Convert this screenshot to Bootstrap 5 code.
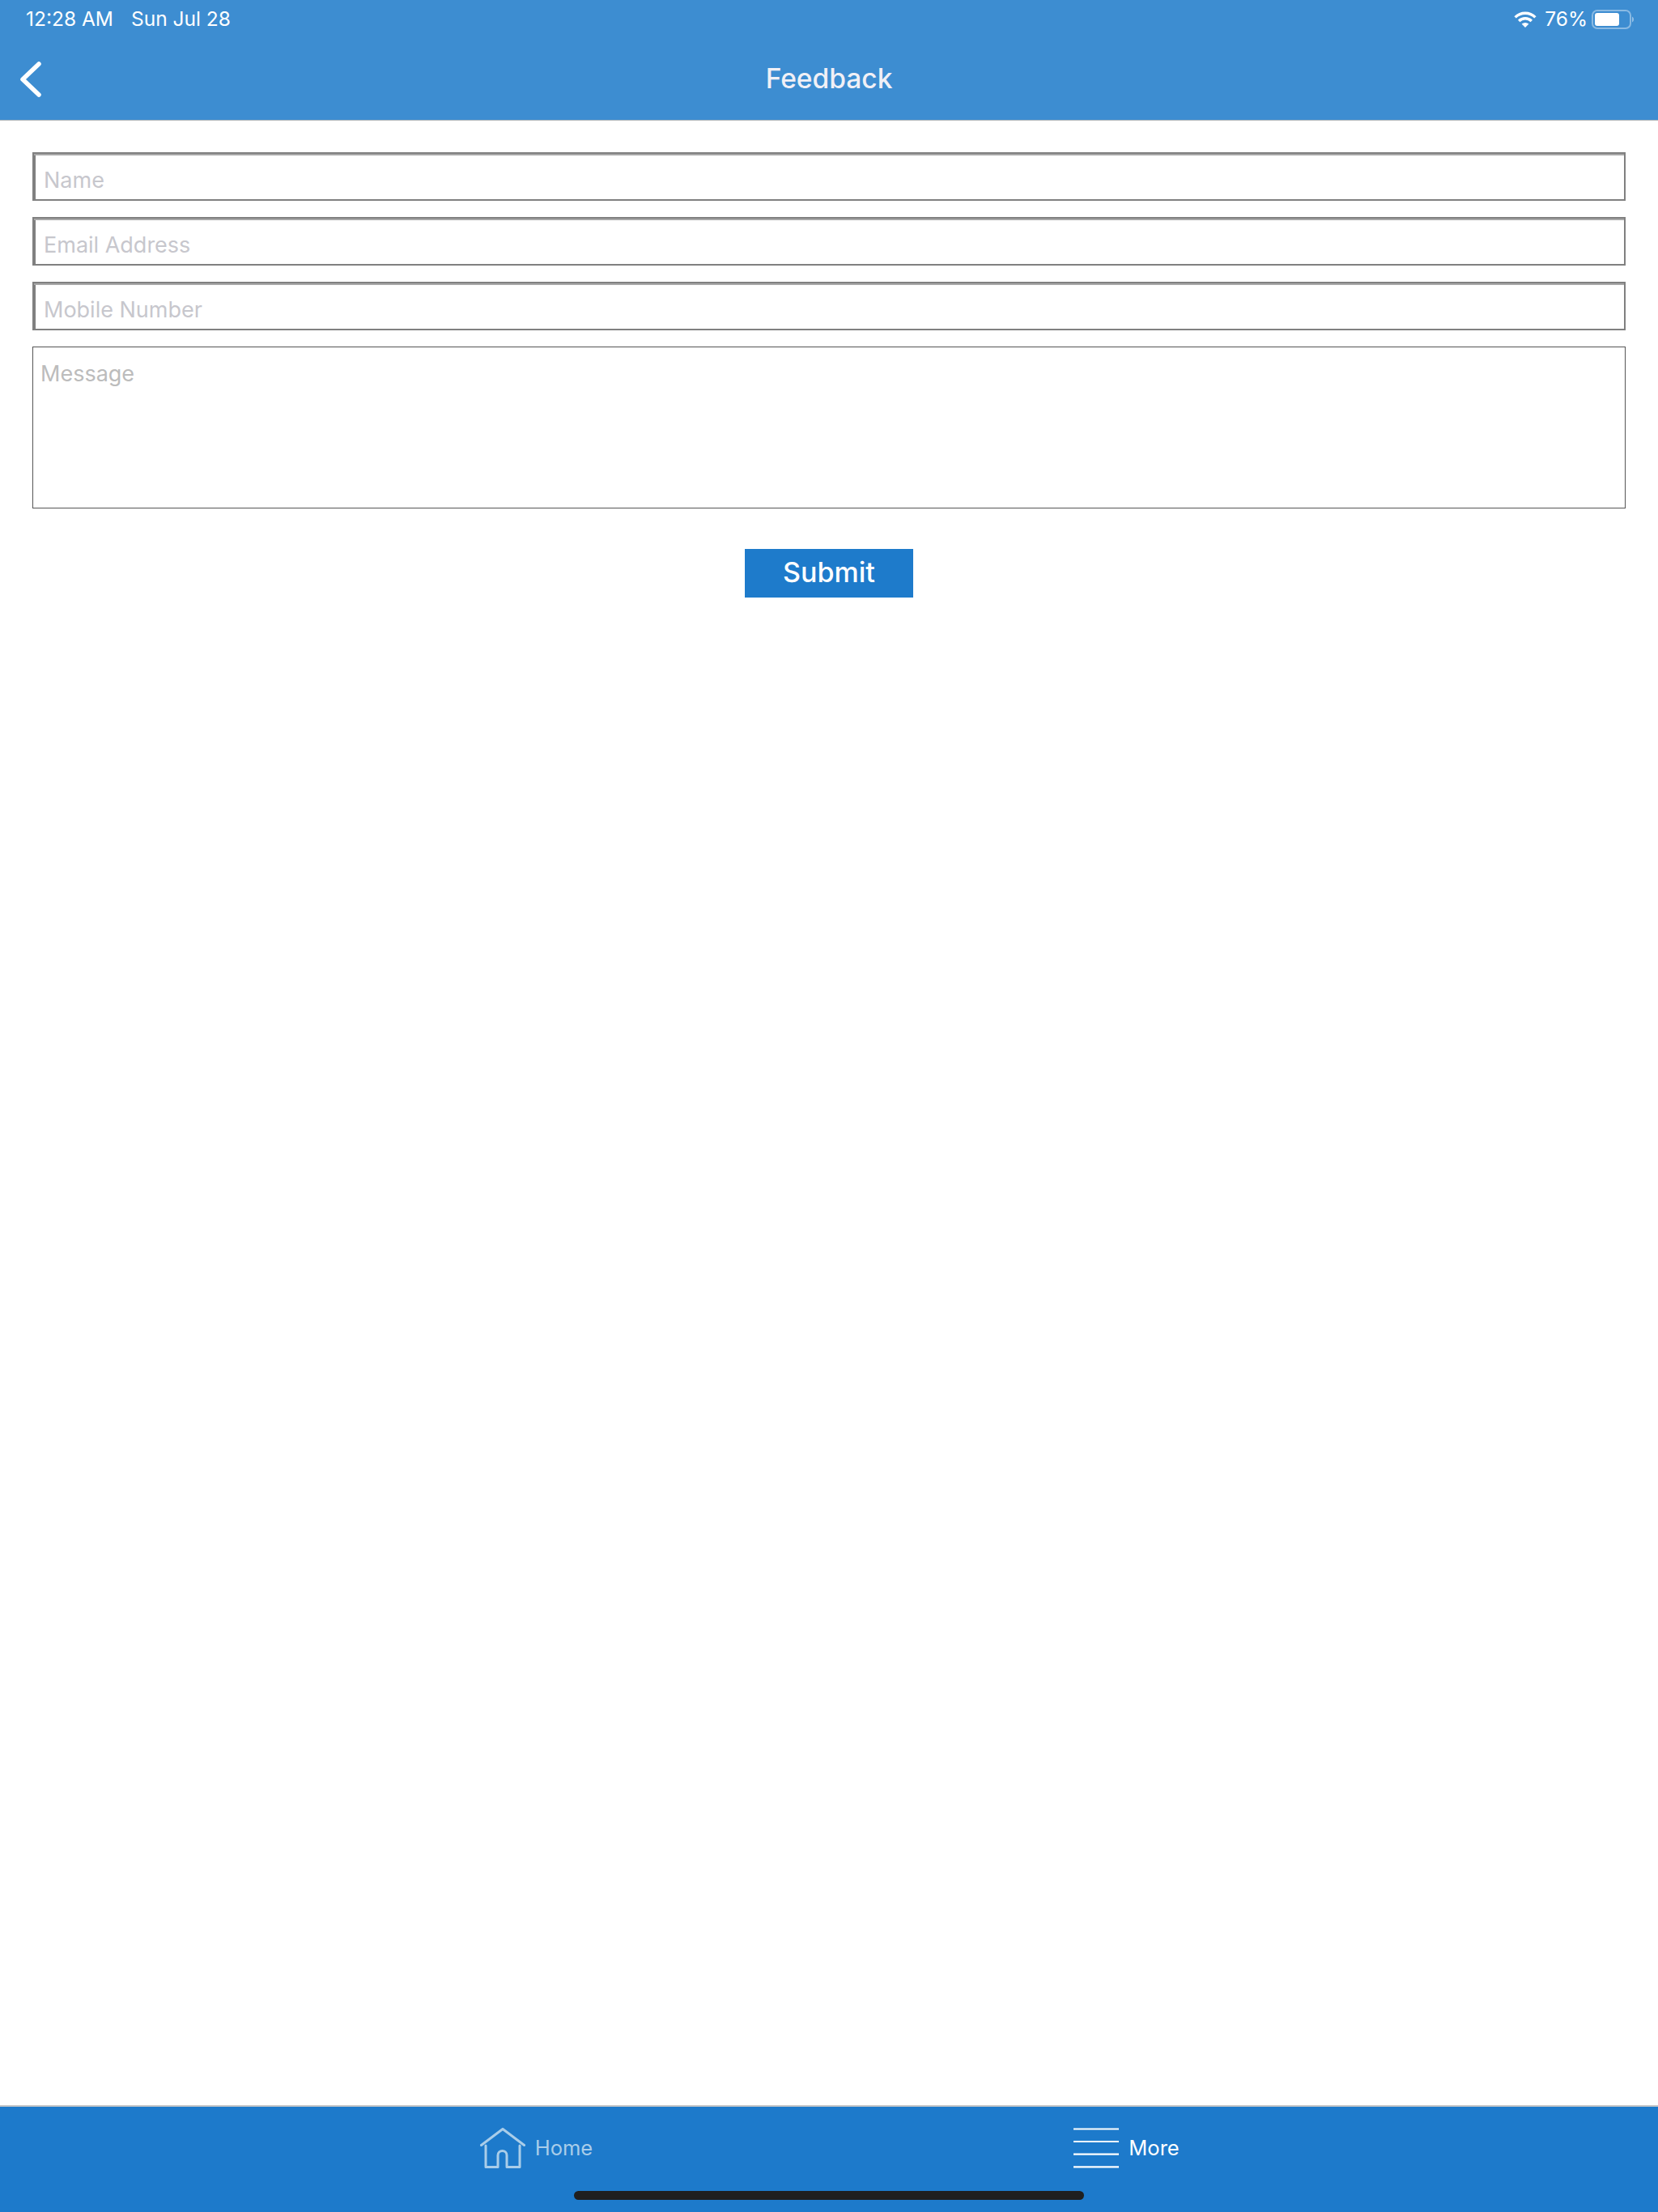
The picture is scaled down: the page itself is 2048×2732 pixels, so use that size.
<!DOCTYPE html>
<html lang="en">
<head>
<meta charset="utf-8">
<title>Feedback</title>
<link href="https://cdn.jsdelivr.net/npm/bootstrap@5.3.0/dist/css/bootstrap.min.css" rel="stylesheet">
<style>
html, body { height: 2732px; margin: 0; }
body { font-family: "Inter", "Liberation Sans", sans-serif; background: #fff; }
.app-shell { height: 2732px; position: relative; }
.top-head { background: #3d8dd1; border-bottom: 1px solid #aeb4b9; height: 149px; color: #fff; }
.status-row { height: 48px; padding: 0 30px 0 32px; font-size: 24.5px; line-height: 46px; }
.stat-text { padding-bottom: 2px; }
.status-row .clock { width: 108px; margin-right: 22px; white-space: nowrap; }
.status-row .pct { margin: 0 5px 0 10px; }
.title-row { height: 100px; }
.title-side { flex: 1 1 0; padding-left: 25px; }
.page-title { font-size: 33.5px; font-weight: 500; color: #f0f0f6; margin: 0; line-height: 1; }
.form-body { padding: 39px 40px 0; gap: 20px; }
.form-control.field-box { height: 60px; border: 2px solid #808080; border-radius: 0; padding: 8px 0 0 12px; font-size: 27px; line-height: 1; box-shadow: inset 0 2px 0 #a8a8a8, inset 2px 0 0 #808080; color: #333; }
.form-control.field-box::placeholder { color: #c7c7cd; opacity: 1; }
.form-control.note-box { height: 200px; border: 1px solid #555; border-radius: 0; padding: 15px 9px; font-size: 27px; line-height: 36px; resize: none; box-shadow: none; }
.form-control.note-box::placeholder { color: #bcbcbc; opacity: 1; }
.btn.send-btn { width: 208px; height: 60px; margin-top: 30px; padding: 0 0 3px; border: 0; border-radius: 0; background: #1e7bcb; color: #fff; font-size: 34px; font-weight: 500; line-height: 57px; }
.tab-strip { background: #1d7acb; border-top: 2px solid #c4c6c8; height: 132px; padding: 26px 0 0 6px; margin-top: auto; }
.tab-item { width: 729px; gap: 12px; font-size: 25.5px; line-height: 50px; height: 50px; }
.tab-dim { color: #a9cde9; }
.tab-lit { color: #fff; }
.home-bar { position: absolute; left: 709px; width: 630px; top: 2706px; height: 11px; background: #1f1f1f; border-radius: 6px; }
.ico { display: block; flex: none; }
</style>
</head>
<body>
<div class="app-shell d-flex flex-column">
  <header class="top-head">
    <div class="status-row d-flex align-items-center">
      <span class="clock stat-text">12:28 AM</span>
      <span class="stat-text">Sun Jul 28</span>
      <span class="ms-auto d-flex align-items-center">
        <svg class="ico" width="28" height="20" viewBox="0 0 28 20" fill="none">
          <path d="M1.6 7.4A17.5 17.5 0 0 1 26.4 7.4" stroke="#fff" stroke-width="3.4"/>
          <path d="M6.2 12A11 11 0 0 1 21.8 12" stroke="#fff" stroke-width="3.4"/>
          <path d="M9.6 15.4Q14 12.4 18.4 15.4L14 20Z" fill="#fff"/>
        </svg>
        <span class="pct stat-text">76%</span>
        <svg class="ico" width="52" height="24" viewBox="0 0 52 24" fill="none">
          <rect x="1" y="1" width="47" height="22" rx="6" stroke="#fff" stroke-opacity=".4" stroke-width="2"/>
          <rect x="4" y="4" width="30" height="16" rx="3" fill="#fff"/>
          <path d="M50 8.5C51.5 9.3 52 10.5 52 12s-.5 2.700-2 3.500Z" fill="#fff" fill-opacity=".45"/>
        </svg>
      </span>
    </div>
    <div class="title-row d-flex align-items-center">
      <div class="title-side">
        <svg class="ico" width="28" height="44" viewBox="0 0 28 44" fill="none">
          <path d="M23 3 3 22 23 41" stroke="#fff" stroke-width="5.500" stroke-linecap="round" stroke-linejoin="round"/>
        </svg>
      </div>
      <h1 class="page-title">Feedback</h1>
      <div class="title-side"></div>
    </div>
  </header>

  <form class="form-body d-flex flex-column align-items-center">
    <input class="form-control field-box" type="text" placeholder="Name">
    <input class="form-control field-box" type="text" placeholder="Email Address">
    <input class="form-control field-box" type="text" placeholder="Mobile Number">
    <textarea class="form-control note-box" placeholder="Message"></textarea>
    <button class="btn send-btn" type="button">Submit</button>
  </form>

  <nav class="tab-strip d-flex justify-content-center">
    <div class="tab-item tab-dim d-flex align-items-center justify-content-center">
      <svg class="ico" width="56" height="50" viewBox="0 0 56 50" fill="none" stroke="#a9cde9" stroke-width="3" stroke-linecap="round" stroke-linejoin="round">
        <path d="M1.500 21.500 28 1.500 54.500 21.500"/>
        <path d="M7 22V48.500H22V34C22 26.500 33 26.500 33 34V48.500H49V22"/>
      </svg>
      <span>Home</span>
    </div>
    <div class="tab-item tab-lit d-flex align-items-center justify-content-center">
      <svg class="ico" width="56" height="50" viewBox="0 0 56 50" fill="none" stroke="#fff" stroke-width="2.200">
        <path d="M0 1.500H56M0 17H56M0 32.700H56M0 48.400H56"/>
      </svg>
      <span>More</span>
    </div>
  </nav>
  <div class="home-bar"></div>
</div>
<script src="https://cdn.jsdelivr.net/npm/bootstrap@5.3.0/dist/js/bootstrap.bundle.min.js"></script>
</body>
</html>
